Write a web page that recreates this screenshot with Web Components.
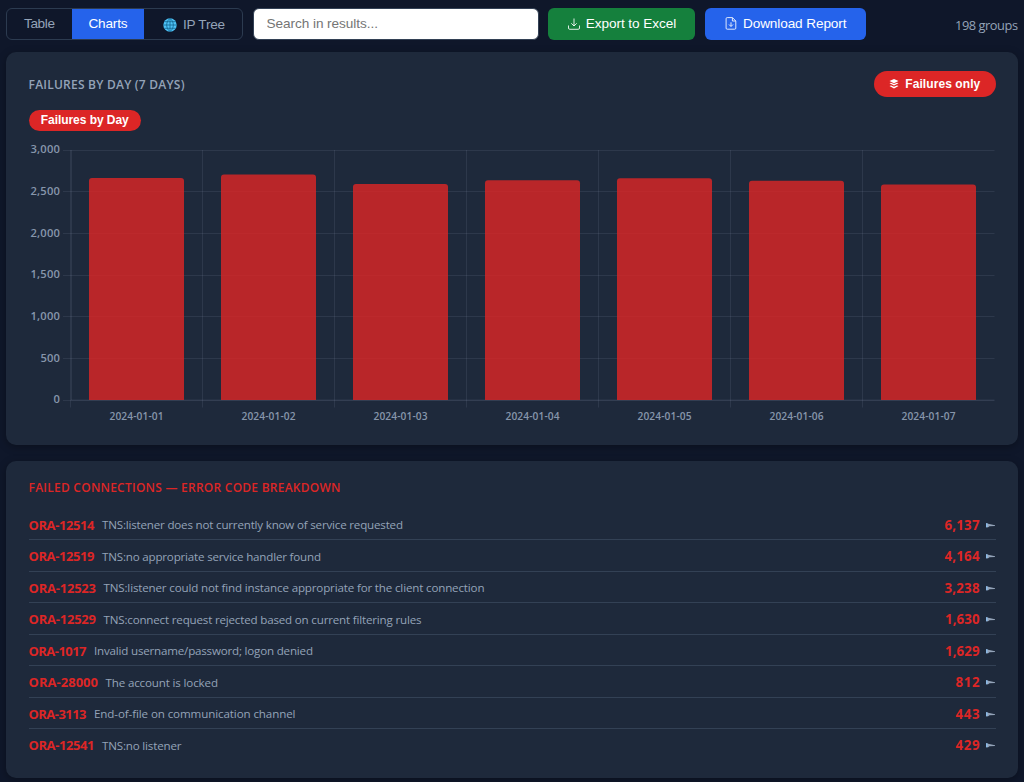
<!DOCTYPE html>
<html lang="en">
<head>
<meta charset="utf-8">
<title>Connection results</title>
<style>
    body {
        margin: 0;
        background: #0f172a;
        color: #94a3b8;
        font-family: "Open Sans", "Noto Sans", sans-serif;
        height: 782px;
        overflow: hidden;
    }
</style>
</head>
<body>
<results-page></results-page>
<script>
// fit-text: spreads its letters over a given width
class FitText extends HTMLElement {
    constructor() {
        super();
        this.attachShadow({mode: 'open'});
        this.shadowRoot.innerHTML = `
<style>
    :host { display: block; white-space: nowrap; }
    span { display: inline-block; vertical-align: top; }
</style>
<span><slot></slot></span>`;
    }
    connectedCallback() {
        const width = Number(this.getAttribute('width'));
        const span = this.shadowRoot.querySelector('span');
        const gap = (width - span.getBoundingClientRect().width) / (this.textContent.length - 1);
        span.style.letterSpacing = gap + 'px';
        this.style.width = width + 'px';
    }
}

// viewTabs
class ViewTabs extends HTMLElement {
    constructor() {
        super();
        this.attachShadow({mode: 'open'});
        this.shadowRoot.innerHTML = `
<style>
    :host {
        display: flex;
        box-sizing: border-box;
        width: 237px;
        height: 32px;
        border: 1px solid #2c3b50;
        border-radius: 6px;
        overflow: hidden;
        font: 13.6px "Liberation Sans", sans-serif;
    }
    div {
        display: flex;
        align-items: center;
        justify-content: center;
    }
    .table { width: 65px; }
    .charts { width: 72px; background: #2563eb; color: #fff; }
    .tree { flex: 1; gap: 6px; padding: 2px 0 0 2px; }
</style>
<div class="table"><fit-text width="31">Table</fit-text></div>
<div class="charts"><fit-text width="39">Charts</fit-text></div>
<div class="tree">
    <svg width="14" height="14" viewBox="0 0 14 14">
        <circle cx="7" cy="7" r="6.7" fill="#4fc3f7"/>
        <path d="M7 .3v13.4M.3 7h13.4M1.2 3.7h11.6M1.2 10.3h11.6M7 .3C2.6 3.5 2.6 10.5 7 13.7M7 .3c4.4 3.2 4.4 10.2 0 13.4" fill="none" stroke="#12658f" stroke-width=".8"/>
    </svg>
    <fit-text width="42">IP Tree</fit-text>
</div>`;
    }
}

// actionButton
class ActionButton extends HTMLElement {
    constructor() {
        super();
        this.attachShadow({mode: 'open'});
        this.shadowRoot.innerHTML = `
<style>
    :host {
        display: flex;
        align-items: center;
        justify-content: center;
        gap: 6px;
        box-sizing: border-box;
        height: 32.5px;
        padding-left: 1px;
        border-radius: 6px;
        background: var(--button-color);
        color: #fff;
        font: 13.6px "Liberation Sans", sans-serif;
    }
</style>
<slot name="icon"></slot><slot></slot>`;
    }
}

// panelCard
class PanelCard extends HTMLElement {
    constructor() {
        super();
        this.attachShadow({mode: 'open'});
        this.shadowRoot.innerHTML = `
<style>
    :host {
        display: block;
        box-sizing: border-box;
        padding: 0 22.5px;
        background: #1e293b;
        border-radius: 10px;
        box-shadow: 0 2px 8px rgba(0, 0, 0, .3);
    }
</style>
<slot></slot>`;
    }
}

// dayChart
const days = [
    ['2024-01-01', 2664],
    ['2024-01-02', 2706],
    ['2024-01-03', 2592],
    ['2024-01-04', 2637],
    ['2024-01-05', 2660],
    ['2024-01-06', 2632],
    ['2024-01-07', 2585]
];
class DayChart extends HTMLElement {
    constructor() {
        super();
        this.attachShadow({mode: 'open'});
        const left = 43;
        const bottom = 260;
        const step = 132;
        let grid = '';
        let bars = '';
        let labels = '';
        for (let i = 0; i <= 6; i++) {
            const y = bottom - i * 250 / 6;
            const line = Math.floor(y) + .5;
            grid += `<path d="M35 ${line}H966.5"/>`;
            const text = (i * 500).toLocaleString('en-US');
            const size = text.length > 3 ? 29.5 : text.length * 6.5;
            labels += `<text x="${32 - size}" y="${y + 3.3}" font-size="11.2" textLength="${size}">${text}</text>`;
        }
        days.forEach(([day, count], i) => {
            const x = left + i * step;
            const top = bottom - count / 12;
            grid += `<path d="M${x - .5} 10V267.5"/>`;
            bars += `<path d="M${x + 18} ${bottom}V${top + 3}q0-3 3-3h89q3 0 3 3V${bottom}z"/>`;
            labels += `<text x="${x + 38.5}" y="279.6" font-size="10.2" textLength="54">${day}</text>`;
        });
        this.shadowRoot.innerHTML = `
<style>
    :host { display: block; height: 300px; margin-left: -.5px; }
    svg { display: block; }
    text { fill: #8796ab; font-family: "Open Sans", sans-serif; font-weight: 600; }
</style>
<svg width="967" height="300" viewBox="0 0 967 300">
    <g stroke="#94a3b8" stroke-opacity=".13">${grid}<path d="M43.5 10V260M43 260H966.5"/></g>
    <g fill="#dc2626" fill-opacity=".82">${bars}</g>
    ${labels}
</svg>`;
    }
}

// errorRow
class ErrorRow extends HTMLElement {
    constructor() {
        super();
        this.attachShadow({mode: 'open'});
        const [codeWidth, textWidth, countWidth] = this.getAttribute('widths').split(' ');
        this.shadowRoot.innerHTML = `
<style>
    :host {
        display: flex;
        align-items: center;
        box-sizing: border-box;
        height: 31.5px;
        padding-top: 2px;
        border-bottom: 1px solid #334155;
    }
    :host(:last-child) { border-bottom-color: transparent; }
    .code {
        color: #dc2626;
        font-size: 13px;
        font-weight: 700;
        margin-right: 7.5px;
    }
    .text { font-size: 11.6px; }
    .count {
        color: #dc2626;
        font-size: 13.3px;
        font-weight: 700;
        margin-left: auto;
    }
    svg { margin: 1px 1px 0 6px; }
</style>
<fit-text class="code" width="${codeWidth}">${this.getAttribute('code')}</fit-text>
<fit-text class="text" width="${textWidth}">${this.textContent}</fit-text>
<fit-text class="count" width="${countWidth}">${this.getAttribute('count')}</fit-text>
<svg width="9" height="5" viewBox="0 0 9 5"><path d="M0 .3L9 2.3V3L3.5 3.2 2.2 4.3H0z" fill="#94a3b8"/><path d="M0 .3h1.6v4H0z" fill="#8bb9e6"/></svg>`;
    }
}

// resultsPage
const page = document.createElement('template');
page.innerHTML = `
<style>
    :host { display: block; padding: 7.5px 6px 0; }
    .toolbar {
        display: flex;
        align-items: center;
        height: 32.5px;
        margin-bottom: 12px;
    }
    input {
        box-sizing: border-box;
        width: 286px;
        height: 32px;
        margin: 0 9px 0 10px;
        padding: 0 12.5px;
        border: 1px solid #334155;
        border-radius: 6px;
        background: #fff;
        font: 13.6px "Liberation Sans", sans-serif;
        letter-spacing: -.06px;
    }
    input::placeholder { color: #757575; }
    .export { width: 147px; --button-color: #15803d; }
    .download { width: 161.5px; margin-left: 9.5px; --button-color: #2563eb; }
    .groups { margin-left: auto; padding-top: 2px; font-size: 12.8px; }
    .chart { height: 393px; padding-top: 18px; margin-bottom: 16px; }
    .errors { height: 317px; padding-top: 18px; }
    .head { display: flex; justify-content: space-between; align-items: center; height: 27px; }
    .title { font-size: 12px; font-weight: 600; }
    .head .title { padding-top: 1px; }
    .red { color: #dc2626; }
    .pill {
        display: flex;
        align-items: center;
        justify-content: center;
        box-sizing: border-box;
        border-radius: 14px;
        background: #dc2626;
        color: #fff;
        font: bold 12px "Liberation Sans", sans-serif;
    }
    .only { width: 121.5px; height: 26px; gap: 6px; }
    .legend { width: 112.5px; height: 21.5px; margin: 12.5px 0 9px; }
    .list { margin-top: 11.5px; }
    .errors .title { display: block; height: 18px; line-height: 18px; }
</style>
<div class="toolbar">
    <view-tabs></view-tabs>
    <input type="text" placeholder="Search in results...">
    <action-button class="export">
        <svg slot="icon" width="12" height="12" viewBox="0 0 12 12" fill="none" stroke="#fff" stroke-opacity=".85"><path d="M6 .5V8M3.3 5.3L6 8l2.7-2.7M.5 7.5V10q0 1.3 1.3 1.3h8.4q1.3 0 1.3-1.3V7.5"/></svg>
        <fit-text width="90.5">Export to Excel</fit-text>
    </action-button>
    <action-button class="download">
        <svg slot="icon" width="12" height="13" viewBox="0 0 12 13" fill="none" stroke="#fff" stroke-opacity=".85"><path d="M7.5.6H2.2Q1.1.6 1.1 1.7v9.4q0 1.1 1.1 1.1h7.5q1.1 0 1.1-1.1V4zM7.4.8V4h3.2M6 5.3v4M4 7.5l2 2 2-2"/></svg>
        <fit-text width="103.5">Download Report</fit-text>
    </action-button>
    <fit-text class="groups" width="63">198 groups</fit-text>
</div>
<panel-card class="chart">
    <div class="head">
        <fit-text class="title" width="156">FAILURES BY DAY (7 DAYS)</fit-text>
        <div class="pill only">
            <svg width="10" height="10" viewBox="0 0 10 10" fill="#fff"><path d="M5 0l4.5 2L5 4.2.5 2zM.5 4.2L2 3.7l3 1.4 3-1.4 1.5.5L5 6.5zM.5 6.9L2 6.4l3 1.4 3-1.4 1.5.5L5 9.5z"/></svg>
            <fit-text width="75">Failures only</fit-text>
        </div>
    </div>
    <div class="pill legend"><fit-text width="88">Failures by Day</fit-text></div>
    <day-chart></day-chart>
</panel-card>
<panel-card class="errors">
    <fit-text class="title red" width="312">FAILED CONNECTIONS — ERROR CODE BREAKDOWN</fit-text>
    <div class="list">
        <error-row code="ORA-12514" count="6,137" widths="66 301 35">TNS:listener does not currently know of service requested</error-row>
        <error-row code="ORA-12519" count="4,164" widths="66 219 35">TNS:no appropriate service handler found</error-row>
        <error-row code="ORA-12523" count="3,238" widths="67.5 381 35">TNS:listener could not find instance appropriate for the client connection</error-row>
        <error-row code="ORA-12529" count="1,630" widths="67.5 318 34.5">TNS:connect request rejected based on current filtering rules</error-row>
        <error-row code="ORA-1017" count="1,629" widths="58 219 34.5">Invalid username/password; logon denied</error-row>
        <error-row code="ORA-28000" count="812" widths="69.5 112.5 24">The account is locked</error-row>
        <error-row code="ORA-3113" count="443" widths="58 201.5 24">End-of-file on communication channel</error-row>
        <error-row code="ORA-12541" count="429" widths="66 79.5 24">TNS:no listener</error-row>
    </div>
</panel-card>`;
class ResultsPage extends HTMLElement {
    constructor() {
        super();
        this.attachShadow({mode: 'open'});
        this.shadowRoot.appendChild(page.content.cloneNode(true));
    }
}

customElements.define('fit-text', FitText);
customElements.define('view-tabs', ViewTabs);
customElements.define('action-button', ActionButton);
customElements.define('panel-card', PanelCard);
customElements.define('day-chart', DayChart);
customElements.define('error-row', ErrorRow);
customElements.define('results-page', ResultsPage);
</script>
</body>
</html>
